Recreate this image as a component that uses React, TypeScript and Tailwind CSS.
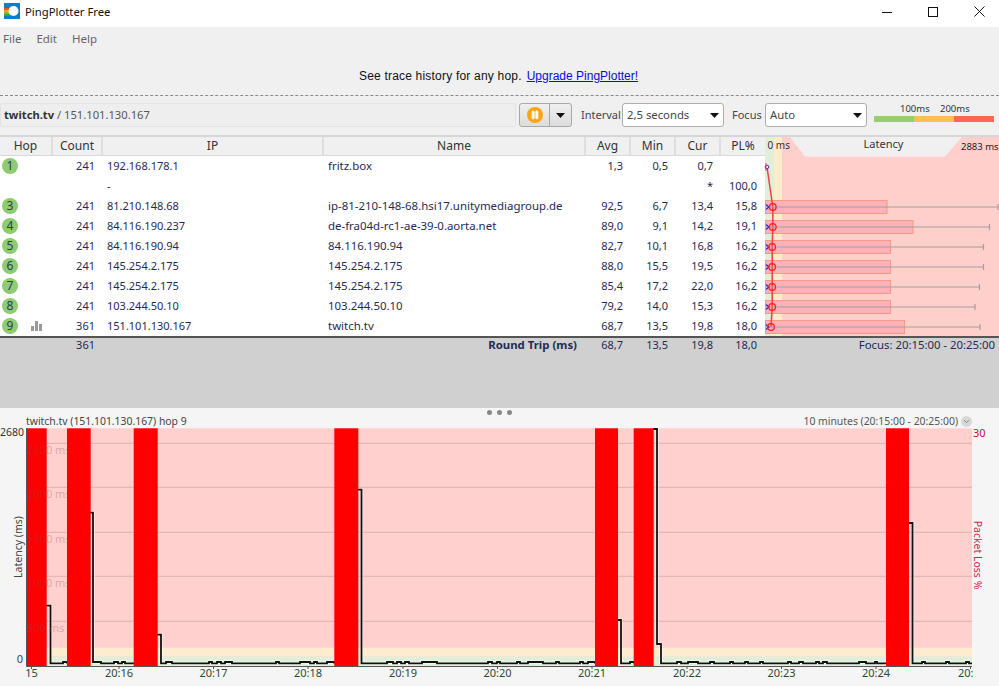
import { ChevronDown, Pause } from 'lucide-react';

const hops = [
  { hop: '1', count: '241', ip: '192.168.178.1', name: 'fritz.box', avg: '1,3', min: '0,5', cur: '0,7', pl: '' },
  { hop: '', count: '', ip: '-', name: '', avg: '', min: '', cur: '*', pl: '100,0' },
  { hop: '3', count: '241', ip: '81.210.148.68', name: 'ip-81-210-148-68.hsi17.unitymediagroup.de', avg: '92,5', min: '6,7', cur: '13,4', pl: '15,8' },
  { hop: '4', count: '241', ip: '84.116.190.237', name: 'de-fra04d-rc1-ae-39-0.aorta.net', avg: '89,0', min: '9,1', cur: '14,2', pl: '19,1' },
  { hop: '5', count: '241', ip: '84.116.190.94', name: '84.116.190.94', avg: '82,7', min: '10,1', cur: '16,8', pl: '16,2' },
  { hop: '6', count: '241', ip: '145.254.2.175', name: '145.254.2.175', avg: '88,0', min: '15,5', cur: '19,5', pl: '16,2' },
  { hop: '7', count: '241', ip: '145.254.2.175', name: '145.254.2.175', avg: '85,4', min: '17,2', cur: '22,0', pl: '16,2' },
  { hop: '8', count: '241', ip: '103.244.50.10', name: '103.244.50.10', avg: '79,2', min: '14,0', cur: '15,3', pl: '16,2' },
  { hop: '9', count: '361', ip: '151.101.130.167', name: 'twitch.tv', avg: '68,7', min: '13,5', cur: '19,8', pl: '18,0' },
];

const columns = 'grid grid-cols-[53px_50px_221px_262px_45px_45px_45px_44px]';

// bar end, whisker end, circle x per row centre
const latencyRows = [
  { y: 207, bar: 887, whisker: 998, cx: 772.8 },
  { y: 227, bar: 913, whisker: 989.5, cx: 772.8 },
  { y: 247, bar: 890.5, whisker: 983.5, cx: 772.2 },
  { y: 267, bar: 890.5, whisker: 983.5, cx: 772.2 },
  { y: 287, bar: 890.5, whisker: 979.5, cx: 772.2 },
  { y: 307, bar: 890.5, whisker: 975, cx: 772.2 },
  { y: 327, bar: 904.5, whisker: 980, cx: 771 },
];

const lossBars = [
  [26.7, 46.7],
  [67, 90.7],
  [133.7, 157.7],
  [334.3, 358.3],
  [595, 618],
  [633.7, 653.7],
  [886, 909],
];

const BASE = 663.4;
const BUMP = 662;

const flat = (from: number, to: number, bumps: number[][]) => {
  let d = `L${from} ${BASE}`;
  bumps.forEach(([a, b]) => {
    d += ` L${a} ${BASE} L${a} ${BUMP} L${b} ${BUMP} L${b} ${BASE}`;
  });
  return `${d} L${to} ${BASE}`;
};

const tracePath = [
  `M46 605.7 L50.5 605.7 ${flat(50.5, 67, [[63, 67]])}`,
  `M90 512.7 L93 512.7 L93 ${BUMP} L101 ${BUMP} L101 ${BASE} ${flat(101, 134, [[114, 118], [122, 125]])}`,
  `M157 634.7 L161 634.7 ${flat(161, 334, [[166, 172], [209, 212], [217, 221], [225, 232], [276, 279], [300, 310], [314, 317], [327, 334]])}`,
  `M357 489.7 L361.5 489.7 ${flat(361.5, 595, [[387, 393], [397, 401], [405, 409], [422, 437], [488, 492], [497, 500], [517, 520], [528, 543], [556, 559], [580, 583], [588, 595]])}`,
  `M617 620 L621 620 ${flat(621, 634, [[630, 634]])}`,
  `M653 429 L657 429 L657 644 L661 644 ${flat(661, 886, [[677, 681], [688, 698], [710, 714], [730, 733], [745, 748], [760, 763], [788, 791], [799, 803], [816, 819], [823, 827], [859, 866], [875, 877]])}`,
  `M908 523 L912.5 523 ${flat(912.5, 972, [[922, 925], [946, 949], [966, 969]])}`,
].join(' ');

const gridLines = [
  { y: 443.3, label: '2500 ms', ly: 454 },
  { y: 487.3, label: '2000 ms', ly: 498 },
  { y: 532.3, label: '1500 ms', ly: 543 },
  { y: 576.3, label: '1000 ms', ly: 587 },
  { y: 621.3, label: '500 ms', ly: 632 },
];

const timeTicks = [
  { x: 31.5, label: '15' },
  { x: 119, label: '20:16' },
  { x: 213.5, label: '20:17' },
  { x: 308, label: '20:18' },
  { x: 403, label: '20:19' },
  { x: 497.5, label: '20:20' },
  { x: 592, label: '20:21' },
  { x: 687, label: '20:22' },
  { x: 781.5, label: '20:23' },
  { x: 876, label: '20:24' },
];

const AppIcon = () => (
  <svg width="16" height="16" viewBox="0 0 16 16" className="-mt-[2px] ml-1 mr-[5px]">
    <rect width="16" height="16" fill="#0a7fd0" />
    <rect y="5" width="6" height="2" fill="#e8541e" />
    <rect y="7" width="6" height="2" fill="#f2a41c" />
    <rect y="9" width="6" height="2" fill="#7cbb2c" />
    <rect y="11" width="6" height="2" fill="#3aa53a" />
    <circle cx="9.5" cy="8" r="5" fill="#fff" />
  </svg>
);

const WindowControls = () => (
  <div className="-mr-[3px] -mt-[1px] ml-auto flex">
    <div className="flex h-[24px] w-[46px] items-center justify-center">
      <svg width="10" height="10" viewBox="0 0 10 10"><path d="M0 5.5H10" stroke="#111" /></svg>
    </div>
    <div className="flex h-[24px] w-[46px] items-center justify-center">
      <svg width="10" height="10" viewBox="0 0 10 10"><rect x=".5" y=".5" width="9" height="9" fill="none" stroke="#111" /></svg>
    </div>
    <div className="flex h-[24px] w-[46px] items-center justify-center">
      <svg width="11" height="11" viewBox="0 0 11 11"><path d="M.5 .5L10.5 10.5M10.5 .5L.5 10.5" stroke="#111" /></svg>
    </div>
  </div>
);

const Caret = () => (
  <svg width="9" height="5" viewBox="0 0 9 5"><path d="M0 0H9L4.5 5Z" fill="#111" /></svg>
);

const Dropdown = ({ value }: { value: string }) => (
  <div className="flex h-[24px] w-[102px] shrink-0 items-center justify-between rounded-[3px] border border-[#adadad] bg-white pl-[4px] pr-[4px] text-[11.3px] text-[#444]">
    <span>{value}</span>
    <Caret />
  </div>
);

const HopBadge = ({ hop }: { hop: string }) => (
  <div className="flex h-[16px] w-[16px] items-center justify-center rounded-full bg-[#8fcb70] text-[12px] leading-none text-[#23405c]">
    {hop}
  </div>
);

const BarsIcon = () => (
  <svg width="11" height="10" viewBox="0 0 11 10" className="ml-[13px]">
    <path d="M0 5H3V10H0ZM4 0H7V10H4ZM8 3H11V10H8Z" fill="#9a9a9a" />
  </svg>
);

const LatencyGraph = () => (
  <svg width="234" height="199" viewBox="765 137 234 199" className="block overflow-visible font-['Noto_Sans',sans-serif]">
    <rect x="765" y="137" width="234" height="199" fill="#ffcfcc" />
    <rect x="765" y="137" width="8.5" height="199" fill="#e0efd9" />
    <rect x="773.5" y="137" width="8.5" height="199" fill="#fdeccb" />
    <polygon points="790,137 805,156.5 945,156.5 962,137" fill="#f0f0f0" />
    <text x="767.5" y="149" fontSize="10" fill="#333">0 ms</text>
    <text x="883.5" y="148" fontSize="11" textAnchor="middle" fill="#333">Latency</text>
    <text x="961" y="150" fontSize="9.5" fill="#222">2883 ms</text>
    {latencyRows.map((r) => (
      <rect key={r.y} x="765.5" y={r.y - 6.5} width={r.bar - 765.5} height="13" fill="#ffb1b9" stroke="#f49a85" />
    ))}
    <path d="M767 167 L772.8 207 L772.8 227 L772.2 247 L772.2 307 L771 327" fill="none" stroke="#f04040" strokeWidth="1.5" />
    {latencyRows.map((r) => (
      <g key={r.y}>
        <path d={`M766 ${r.y}H${r.whisker}M${r.whisker} ${r.y - 3}V${r.y + 3}`} fill="none" stroke="#a0a0a0" strokeWidth="1.2" />
        <path d={`M766 ${r.y - 2.5}L769 ${r.y}L766 ${r.y + 2.5}`} fill="none" stroke="#2a2ae0" strokeWidth="1.2" />
        <circle cx={r.cx} cy={r.y} r="3.3" fill="none" stroke="#ff2020" strokeWidth="1.3" />
      </g>
    ))}
    <circle cx="767" cy="167" r="1.8" fill="#fff" stroke="#2a2ae0" />
    <path d="M765.5 163 H766.5 V171 H765.5Z" fill="#f04040" />
  </svg>
);

const HistoryChart = () => (
  <svg width="999" height="258" viewBox="0 428 999 258" className="block overflow-visible font-['Noto_Sans',sans-serif]">
    <rect x="26.5" y="428.3" width="945.5" height="238" fill="#ffd0cd" />
    <rect x="26.5" y="647.7" width="945.5" height="9" fill="#fdeccf" />
    <rect x="26.5" y="656.7" width="945.5" height="9.3" fill="#e0efd9" />
    {gridLines.map((g) => (
      <path key={g.y} d={`M26.5 ${g.y}H972`} stroke="#c9a8a5" strokeOpacity=".7" />
    ))}
    <path d={tracePath} fill="none" stroke="#fff" strokeOpacity=".55" strokeWidth="3.5" />
    <path d={tracePath} fill="none" stroke="#111" strokeWidth="1.8" />
    {lossBars.map(([a, b]) => (
      <rect key={a} x={a} y="428.3" width={b - a} height="238" fill="#ff0000" />
    ))}
    {gridLines.map((g) => (
      <text key={g.label} x="27" y={g.ly} fontSize="11" fill="#8a4a48" fillOpacity=".32">{g.label}</text>
    ))}
    <path d="M26.5 428V666.5H972" fill="none" stroke="#555" />
    {timeTicks.map((t) => (
      <g key={t.label}>
        <path d={`M${t.x} 666V669`} stroke="#555" />
        <text x={t.x} y="677" fontSize="11" textAnchor="middle" fill="#2b4a35">{t.label}</text>
      </g>
    ))}
    <path d="M970.5 666V669" stroke="#555" />
    <text x="958" y="677" fontSize="11" fill="#2b4a35">20:</text>
    <text x="24" y="435.5" fontSize="10.5" textAnchor="end" fill="#333">2680</text>
    <text x="23" y="663" fontSize="11" textAnchor="end" fill="#33475c">0</text>
    <text transform="translate(22 547) rotate(-90)" fontSize="10.5" textAnchor="middle" fill="#444">Latency (ms)</text>
    <text x="973" y="437" fontSize="11" fill="#c8102e">30</text>
    <text transform="translate(974 555) rotate(90)" fontSize="10.5" textAnchor="middle" fill="#c8274a">Packet Loss %</text>
  </svg>
);

export default function App() {
  return (
    <div className="h-[686px] w-[999px] overflow-hidden bg-[#f0f0f0] font-['Noto_Sans',sans-serif] text-[11px] text-[#333]">
      <div className="flex h-[27px] items-center bg-white pb-[3px]">
        <AppIcon />
        <span className="text-[11.3px] text-[#111]">PingPlotter Free</span>
        <WindowControls />
      </div>

      <div className="flex h-[23px] items-center gap-[15px] pl-[3px] text-[11.5px] text-[#666]">
        <span>File</span>
        <span>Edit</span>
        <span>Help</span>
      </div>

      <div className="flex h-[46px] items-center justify-center border-b border-dashed border-[#8a8a8a] pr-[2px] pt-[7px] font-['Liberation_Sans',sans-serif] text-[12px] text-[#111]">
        <span className="tracking-[0.2px]">See trace history for any hop.</span>
        <span className="ml-[5px] text-[#0a0ae0] underline">Upgrade PingPlotter!</span>
      </div>

      <div className="flex h-[39px] items-center pb-[2px] pt-[1px]">
        <div className="flex h-[24px] w-[516px] shrink-0 items-center rounded-[2px] border border-[#e3e3e3] bg-[#eeeeee] pl-[3px] text-[11.2px] text-[#555]">
          <span className="font-bold text-[#333]">twitch.tv</span>
          <span>&nbsp;/ 151.101.130.167</span>
        </div>
        <div className="ml-[3px] flex h-[24px] w-[53px] shrink-0 rounded-[3px] border border-[#a8a8a8] bg-gradient-to-b from-[#f0f0f0] to-[#dcdcdc]">
          <div className="flex w-[30px] items-center justify-center border-r border-[#a8a8a8]">
            <div className="flex h-[16px] w-[16px] items-center justify-center rounded-full bg-[#ffa30f]">
              <Pause size={10} fill="#fff" stroke="#fff" strokeWidth={2} />
            </div>
          </div>
          <div className="flex flex-1 items-center justify-center"><Caret /></div>
        </div>
        <span className="ml-[9px] w-[41px] shrink-0 text-[11px] text-[#444]">Interval</span>
        <Dropdown value="2,5 seconds" />
        <span className="ml-[8px] w-[33px] shrink-0 text-[11px] text-[#444]">Focus</span>
        <Dropdown value="Auto" />
        <div className="ml-[7px] flex w-[120px] shrink-0 flex-col pb-[7px]">
          <div className="flex h-[14px] items-end pl-[26px] text-[9.5px] leading-[12px] text-[#333]">
            <span className="w-[40px]">100ms</span>
            <span>200ms</span>
          </div>
          <div className="mt-[1px] flex h-[6px]">
            <div className="w-[40px] bg-[#99cc70]" />
            <div className="w-[40px] bg-[#ffbf55]" />
            <div className="w-[40px] bg-[#ff6655]" />
          </div>
        </div>
      </div>

      <div className="flex h-[201px] border-t-2 border-[#d6d6d6]">
        <div className="w-[765px] shrink-0">
          <div className={`${columns} h-[19px] border-b border-[#d8d8d8] text-center text-[12px] leading-[18px] text-[#333]`}>
            <div className="border-r-2 border-[#dedede]">Hop</div>
            <div className="border-r-2 border-[#dedede]">Count</div>
            <div className="border-r-2 border-[#dedede]">IP</div>
            <div className="border-r-2 border-[#dedede]">Name</div>
            <div className="border-r-2 border-[#dedede]">Avg</div>
            <div className="border-r-2 border-[#dedede]">Min</div>
            <div className="border-r-2 border-[#dedede]">Cur</div>
            <div>PL%</div>
          </div>
          <div className="bg-white text-[#1f2b55]">
            {hops.map((row, i) => (
              <div key={i} className={`${columns} h-[20px] items-center leading-[18px]`}>
                <div className="flex items-center pl-[2px]">
                  {row.hop && <HopBadge hop={row.hop} />}
                  {row.hop === '9' && <BarsIcon />}
                </div>
                <div className="pr-[8px] text-right">{row.count}</div>
                <div className="pl-[4px]">{row.ip}</div>
                <div className="pl-[4px] text-[11.45px]">{row.name}</div>
                <div className="pr-[8px] text-right">{row.avg}</div>
                <div className="pr-[8px] text-right">{row.min}</div>
                <div className="pr-[8px] text-right">{row.cur}</div>
                <div className="pr-[8px] text-right">{row.pl}</div>
              </div>
            ))}
          </div>
        </div>
        <LatencyGraph />
      </div>

      <div className="flex h-[72px] items-start border-t-2 border-[#555] bg-[#d0d0d0] text-[#1f2b55]">
        <div className={`${columns} w-[765px] shrink-0 items-center leading-[14px]`}>
          <div />
          <div className="pr-[8px] text-right">361</div>
          <div />
          <div className="pr-[9px] text-right text-[11.4px] font-bold">Round Trip (ms)</div>
          <div className="pr-[8px] text-right">68,7</div>
          <div className="pr-[8px] text-right">13,5</div>
          <div className="pr-[8px] text-right">19,8</div>
          <div className="pr-[8px] text-right">18,0</div>
        </div>
        <span className="ml-auto pr-[4px] text-[11.35px] leading-[14px]">Focus: 20:15:00 - 20:25:00</span>
      </div>

      <div className="h-[278px] bg-[#f5f5f5]">
        <div className="flex h-[20px] items-start">
          <div className="mt-[6px] flex-1 pl-[26px] text-[10.4px] leading-[15px] text-[#444]">twitch.tv (151.101.130.167) hop 9</div>
          <div className="mt-[2px] flex gap-[5px]">
            <span className="h-[5px] w-[5px] rounded-full bg-[#888]" />
            <span className="h-[5px] w-[5px] rounded-full bg-[#888]" />
            <span className="h-[5px] w-[5px] rounded-full bg-[#888]" />
          </div>
          <div className="mt-[6px] flex flex-1 items-center justify-end gap-[3px] pr-[27px] text-[10.4px] leading-[15px] text-[#555]">
            <span>10 minutes (20:15:00 - 20:25:00)</span>
            <div className="flex h-[11px] w-[11px] items-center justify-center rounded-full bg-[#d8d8d8]">
              <ChevronDown size={9} stroke="#666" />
            </div>
          </div>
        </div>
        <HistoryChart />
      </div>
    </div>
  );
}
